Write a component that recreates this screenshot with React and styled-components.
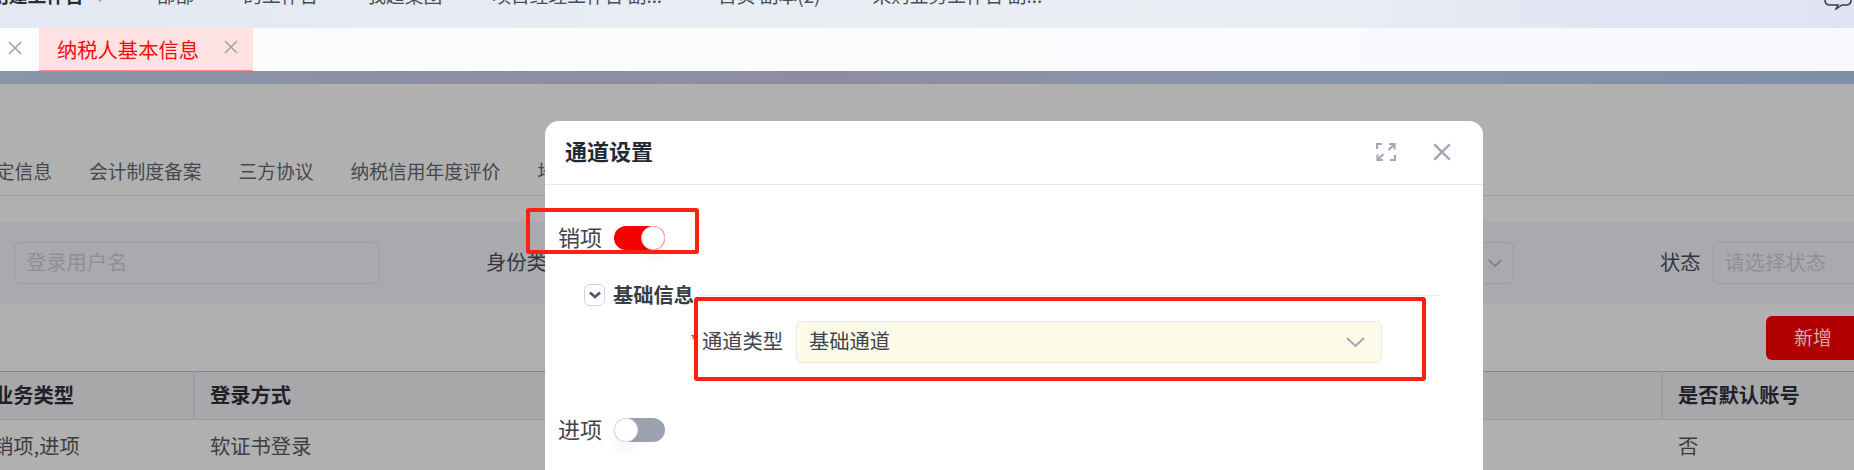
import React from "react";
import styled, { createGlobalStyle } from "styled-components";

const Global = createGlobalStyle`
  html, body { margin: 0; padding: 0; width: 1854px; height: 470px; overflow: hidden; background: #b0b0b0; }
  * { box-sizing: border-box; }
`;

const Page = styled.div`
  position: relative;
  width: 1854px;
  height: 470px;
  overflow: hidden;
  display: flex;
  flex-direction: column;
  font-family: "Noto Sans CJK SC", "Liberation Sans", sans-serif;
  color: #3f4248;
`;

const TopBar = styled.header`
  height: 28px;
  flex: none;
  overflow: hidden;
  background: linear-gradient(90deg, #e3e8f2 0%, #e7ebf4 30%, #ebeff4 62%, #e9edf4 72%, #e2e4f3 88%, #e1e3f3 100%);
`;

const NavRow = styled.nav`
  display: flex;
  align-items: center;
  height: 24px;
  margin-top: -17px;
  margin-left: -10px;
  font-size: 18.75px;
  line-height: 24px;
  white-space: nowrap;
  color: #4a4d55;
`;

const NavBrand = styled.span`
  font-weight: 700;
  color: #2b2d33;
`;

const NavCaret = styled.svg`
  flex: none;
  margin: 0 53px 0 12px;
`;

const NavItem = styled.span`
  margin-right: ${(p) => p.$gap}px;
`;

const ChatIcon = styled.svg`
  position: absolute;
  right: 2px;
  top: 0;
`;

const TabBar = styled.div`
  height: 43px;
  flex: none;
  display: flex;
  background: linear-gradient(90deg, #fcfdfe, #fafbfd 50%, #f8f9fd);
`;

const TabClose = styled.span`
  display: flex;
  align-items: center;
  margin-bottom: 4px;
  color: #a3a3a3;
`;

const LeadTab = styled.div`
  width: 39px;
  display: flex;
  align-items: center;
  padding-left: 8px;
`;

const ActiveTab = styled.div`
  width: 214px;
  display: flex;
  align-items: center;
  justify-content: space-between;
  padding: 0 15px 0 18px;
  background: #fee2e2;
  border-bottom: 1px solid #f98c8c;
  color: #f60a0a;
  font-size: 20.3px;
`;

const Strip = styled.div`
  height: 13px;
  flex: none;
  background: linear-gradient(90deg, #8b96aa 0%, #8b8fa6 20%, #8e8ca4 45%, #8a92a8 62%, #8794a9 75%, #7f8fa8 100%);
`;

const Content = styled.main`
  flex: 1;
  background: #b0b0b0;
`;

const SubTabs = styled.div`
  display: flex;
  gap: 37px;
  height: 48px;
  margin: 64px 0 26px -23px;
  border-bottom: 1px solid #9a9ca2;
  font-size: 18.75px;
  line-height: 45px;
  white-space: nowrap;
  color: #45484e;
`;

const FilterBand = styled.section`
  height: 82px;
  display: grid;
  grid-template-columns: 472px 1174px auto;
  align-items: center;
  padding-left: 14px;
  background: #a9aaae;
`;

const FilterGroup = styled.div`
  display: flex;
  align-items: center;
  gap: 12px;
`;

const FilterLabel = styled.label`
  font-size: 20.3px;
  margin-bottom: 4px;
  color: #33363c;
  white-space: nowrap;
`;

const FilterInput = styled.div`
  width: ${(p) => p.$w}px;
  height: 42px;
  display: flex;
  align-items: center;
  justify-content: ${(p) => (p.$arrow ? "flex-end" : "flex-start")};
  padding: 0 11px ${(p) => (p.$arrow ? "0" : "4px")} 11px;
  border: 1px solid #9b9da2;
  border-radius: 6px;
  font-size: 20.3px;
  color: #8f9094;
  background: transparent;
  white-space: nowrap;
`;

const Toolbar = styled.div`
  display: flex;
  justify-content: flex-end;
  margin: 12px -6px 11px 0;
`;

const PrimaryButton = styled.button`
  width: 94px;
  height: 44px;
  padding: 0 0 4px;
  border: 0;
  border-radius: 6px;
  background: #b00000;
  color: #c8b2b2;
  font: inherit;
  font-size: 18.75px;
`;

const Table = styled.div`
  display: grid;
  grid-template-columns: 217px 1468px 215px;
  margin-left: -22px;
  font-size: 20.3px;
`;

const HeadCell = styled.div`
  height: 49px;
  display: flex;
  align-items: center;
  padding: 0 0 4px 15px;
  background: #a8a8aa;
  border-top: 1px solid #83858d;
  border-bottom: 1px solid #9a9ca2;
  border-right: ${(p) => (p.$last ? "0" : "2px solid #9c9ea4")};
  font-weight: 700;
  color: #1e2129;
  white-space: nowrap;
`;

const BodyCell = styled.div`
  height: 52px;
  display: flex;
  align-items: center;
  padding: 0 0 2px 15px;
  color: #3a3d44;
  white-space: nowrap;
`;

const Modal = styled.section`
  position: absolute;
  left: 545px;
  top: 121px;
  width: 938px;
  height: 380px;
  background: #fff;
  border-radius: 14px 14px 0 0;
  display: flex;
  flex-direction: column;
`;

const ModalHeader = styled.div`
  height: 64px;
  flex: none;
  display: flex;
  align-items: center;
  padding: 0 32px 2px 20px;
  border-bottom: 1px solid #e9eaec;
`;

const ModalTitle = styled.h2`
  margin: 0 0 4px;
  flex: 1;
  font-size: 22px;
  font-weight: 700;
  color: #1f2937;
`;

const HeaderIcons = styled.div`
  display: flex;
  align-items: center;
  gap: 37px;
  color: #a3a8b4;
`;

const ModalBody = styled.div`
  padding: 41px 0 0 13px;
`;

const SwitchRow = styled.div`
  display: flex;
  align-items: center;
  gap: 12px;
  height: 24px;
`;

const SwitchLabel = styled.span`
  margin-bottom: 4px;
  font-size: 22px;
  color: #3f444d;
`;

const SwitchTrack = styled.span`
  position: relative;
  width: 51px;
  height: 24px;
  border-radius: 12px;
  background: ${(p) => (p.$on ? "#f60000" : "#9ca3af")};
`;

const SwitchKnob = styled.span`
  position: absolute;
  top: 0;
  ${(p) => (p.$on ? "right: 0;" : "left: 0;")}
  width: 24px;
  height: 24px;
  border-radius: 50%;
  background: #fff;
  border: 1px solid ${(p) => (p.$on ? "#fbc4c4" : "#e5e7eb")};
  box-shadow: 0 10px 12px rgba(0, 0, 0, 0.04);
`;

const Section = styled.div`
  margin: 34px 43px 0 26px;
`;

const SectionHead = styled.div`
  display: flex;
  align-items: center;
  gap: 7px;
  height: 22px;
`;

const Disclosure = styled.span`
  width: 21px;
  height: 22px;
  display: flex;
  align-items: center;
  justify-content: center;
  border: 1px solid #c9d3f0;
  border-radius: 6px;
  color: #4b5563;
`;

const SectionTitle = styled.span`
  margin: 0 0 3px 1px;
  font-size: 20.3px;
  font-weight: 700;
  color: #3a3d44;
  white-space: nowrap;
`;

const SectionRule = styled.span`
  flex: 1;
  height: 1px;
  background: #eceef0;
`;

const FieldRow = styled.div`
  display: flex;
  align-items: center;
  margin: 15px 58px 0 106px;
  height: 42px;
`;

const Required = styled.span`
  width: 12px;
  flex: none;
  margin-bottom: 2px;
  font-size: 20px;
  line-height: 20px;
  color: #f33;
`;

const FieldLabel = styled.label`
  width: 94px;
  flex: none;
  margin-bottom: 4px;
  font-size: 20.3px;
  color: #3f444d;
  white-space: nowrap;
`;

const SelectBox = styled.div`
  flex: 1;
  height: 42px;
  display: flex;
  align-items: center;
  justify-content: space-between;
  padding: 0 16px 0 12px;
  background: #fefbe8;
  border: 1px solid #e5e7eb;
  border-radius: 6px;
  font-size: 20.3px;
  color: #3f444d;
`;

const SelectValue = styled.span`
  margin-bottom: 4px;
`;

const SpacedRow = styled(SwitchRow)`
  margin-top: 55px;
`;

const Annotation = styled.div`
  position: absolute;
  left: ${(p) => p.$x}px;
  top: ${(p) => p.$y}px;
  width: ${(p) => p.$w}px;
  height: ${(p) => p.$h}px;
  border: 4px solid #ff2014;
  border-radius: 3px;
  pointer-events: none;
`;

const Cross = ({ size = 14, sw = 1.6 }) => (
  <svg width={size} height={size} viewBox="0 0 14 14" fill="none" stroke="currentColor" strokeWidth={sw}>
    <path d="M1 1l12 12M13 1L1 13" />
  </svg>
);

const Chevron = ({ w = 19, h = 10, sw = 2, color = "#a3a8b4" }) => (
  <svg width={w} height={h} viewBox="0 0 19 10" fill="none" stroke={color} strokeWidth={sw}>
    <path d="M1 1l8.500 8L18 1" />
  </svg>
);

const ExpandIcon = () => (
  <svg width="20" height="20" viewBox="0 0 20 20" fill="none" stroke="currentColor" strokeWidth="2.2">
    <path d="M1 7V2h5M19 13v5h-5" />
    <path d="M13 2h5.500v5.500M18.500 2l-6 6M7 18H1.500v-5.500M1.500 18l6-6" />
  </svg>
);

export default function App() {
  return (
    <Page>
      <Global />
      <TopBar>
        <NavRow>
          <NavBrand>创建工作台</NavBrand>
          <NavCaret width="8" height="24" viewBox="0 0 8 24" fill="none" stroke="#9a9da6" strokeWidth="1.2">
            <path d="M1 14l3 4 3-4" />
          </NavCaret>
          <NavItem $gap={49}>部部</NavItem>
          <NavItem $gap={49}>的工作台</NavItem>
          <NavItem $gap={50}>我超集团</NavItem>
          <NavItem $gap={56}>项目经理工作台 副...</NavItem>
          <NavItem $gap={52}>首页 副本(2)</NavItem>
          <NavItem $gap={0}>采购业务工作台 副...</NavItem>
        </NavRow>
        <ChatIcon width="28" height="10" viewBox="0 0 28 10" fill="none" stroke="#3a3d44" strokeWidth="1.5">
          <path d="M1 0c0 3 2 5 5 5h8l-2 4 6-4h4c3 0 5-2 5-5" />
        </ChatIcon>
      </TopBar>
      <TabBar>
        <LeadTab>
          <TabClose><Cross /></TabClose>
        </LeadTab>
        <ActiveTab>
          纳税人基本信息
          <TabClose><Cross /></TabClose>
        </ActiveTab>
      </TabBar>
      <Strip />
      <Content>
        <SubTabs>
          <span>核定信息</span>
          <span>会计制度备案</span>
          <span>三方协议</span>
          <span>纳税信用年度评价</span>
          <span>地址信息</span>
        </SubTabs>
        <FilterBand>
          <FilterGroup>
            <FilterInput $w={366}>登录用户名</FilterInput>
          </FilterGroup>
          <FilterGroup>
            <FilterLabel>身份类型</FilterLabel>
            <FilterInput $w={935} $arrow>
              <Chevron w={14} h={8} color="#75787f" />
            </FilterInput>
          </FilterGroup>
          <FilterGroup>
            <FilterLabel>状态</FilterLabel>
            <FilterInput $w={200}>请选择状态</FilterInput>
          </FilterGroup>
        </FilterBand>
        <Toolbar>
          <PrimaryButton>新增</PrimaryButton>
        </Toolbar>
        <Table>
          <HeadCell>业务类型</HeadCell>
          <HeadCell>登录方式</HeadCell>
          <HeadCell $last>是否默认账号</HeadCell>
          <BodyCell>销项,进项</BodyCell>
          <BodyCell>软证书登录</BodyCell>
          <BodyCell>否</BodyCell>
        </Table>
      </Content>

      <Modal>
        <ModalHeader>
          <ModalTitle>通道设置</ModalTitle>
          <HeaderIcons>
            <ExpandIcon />
            <Cross size={18} sw={1.9} />
          </HeaderIcons>
        </ModalHeader>
        <ModalBody>
          <SwitchRow>
            <SwitchLabel>销项</SwitchLabel>
            <SwitchTrack $on><SwitchKnob $on /></SwitchTrack>
          </SwitchRow>
          <Section>
            <SectionHead>
              <Disclosure>
                <svg width="12" height="8" viewBox="0 0 12 8" fill="none" stroke="currentColor" strokeWidth="2.6">
                  <path d="M1 1.500l5 4.500 5-4.500" />
                </svg>
              </Disclosure>
              <SectionTitle>基础信息</SectionTitle>
              <SectionRule />
            </SectionHead>
            <FieldRow>
              <Required>*</Required>
              <FieldLabel>通道类型</FieldLabel>
              <SelectBox>
                <SelectValue>基础通道</SelectValue>
                <Chevron />
              </SelectBox>
            </FieldRow>
          </Section>
          <SpacedRow>
            <SwitchLabel>进项</SwitchLabel>
            <SwitchTrack><SwitchKnob /></SwitchTrack>
          </SpacedRow>
        </ModalBody>
      </Modal>
      <Annotation $x={526} $y={208} $w={173} $h={46} />
      <Annotation $x={694} $y={297} $w={732} $h={84} />
    </Page>
  );
}
